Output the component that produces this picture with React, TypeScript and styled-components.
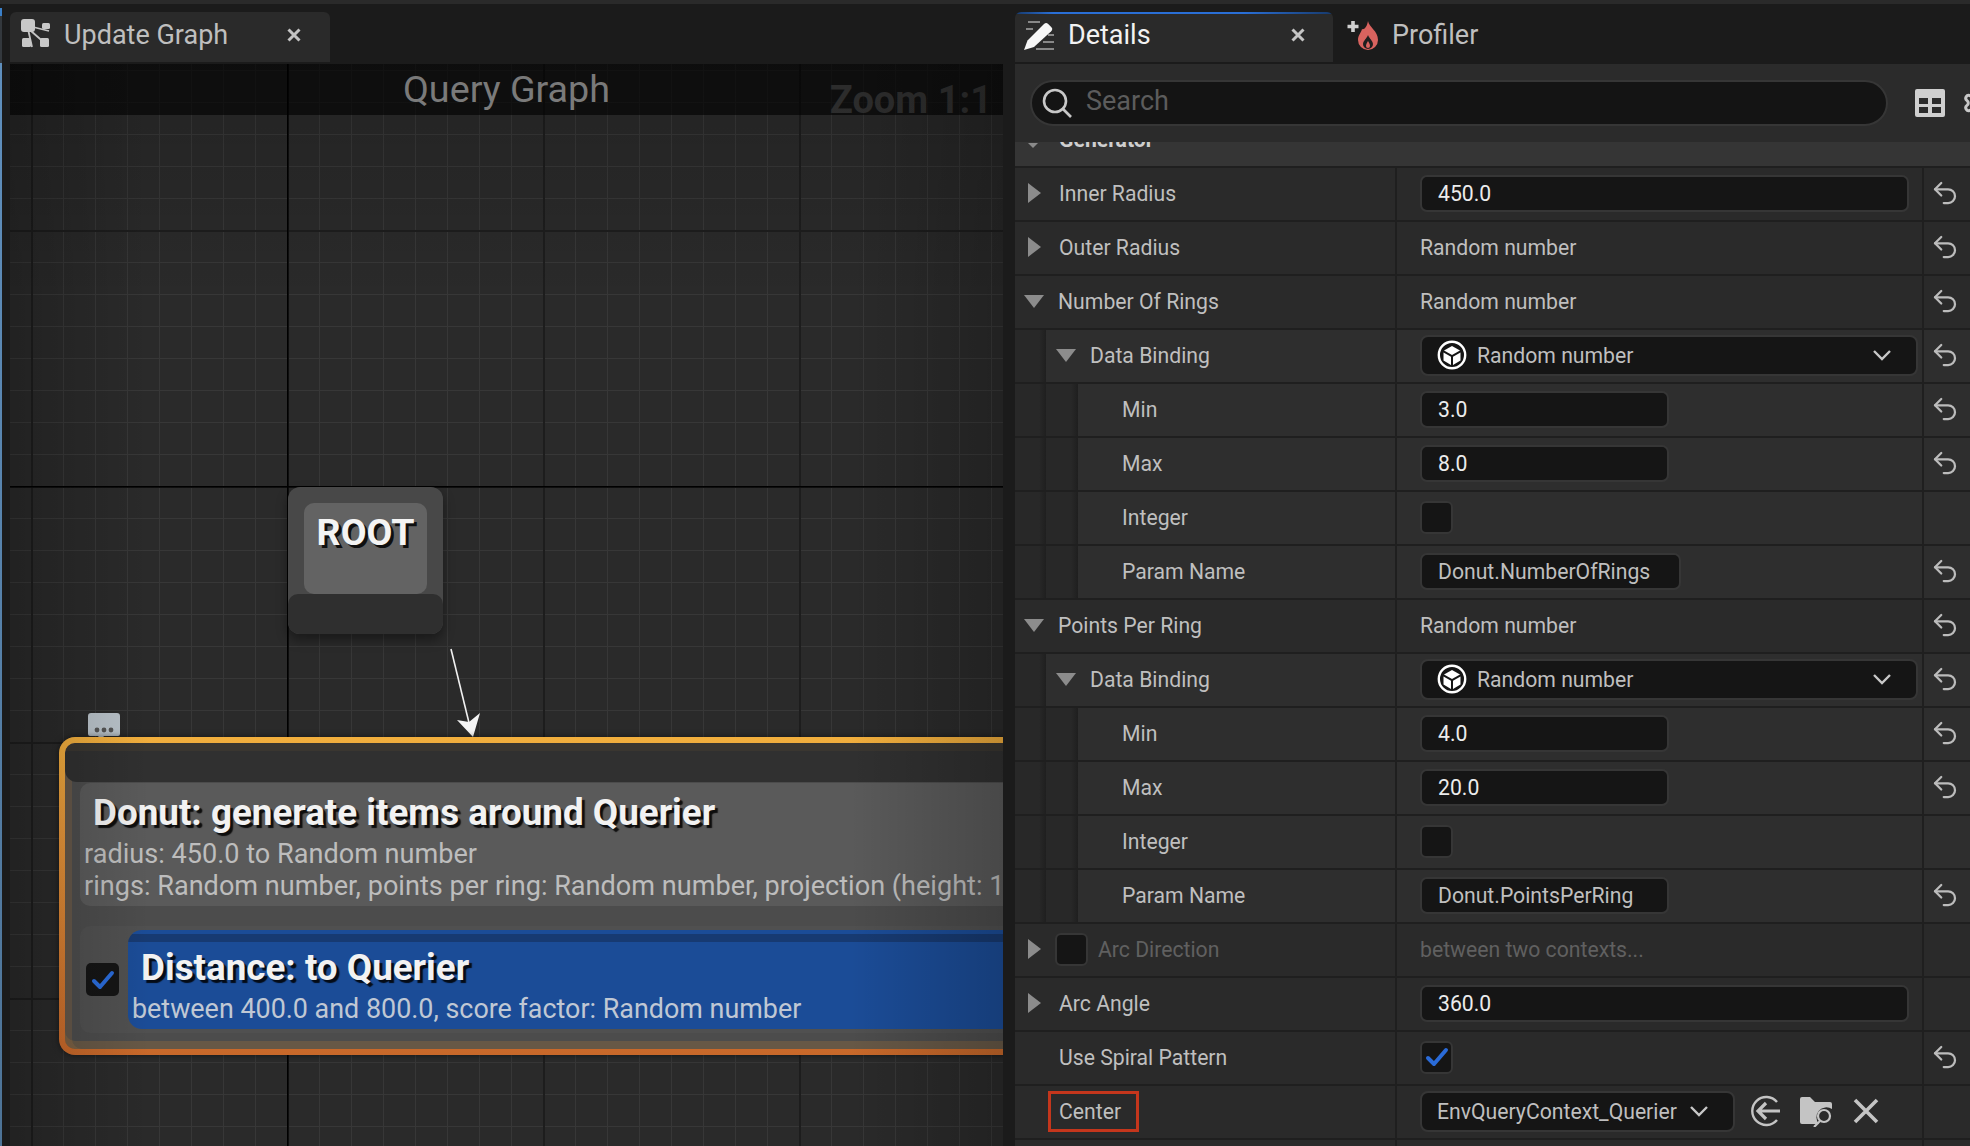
import React from 'react';
import styled, { createGlobalStyle } from 'styled-components';
import { Settings, Undo2 } from 'lucide-react';

const GlobalStyle = createGlobalStyle`
  html, body {
    margin: 0;
    padding: 0;
    background: #1b1b1b;
    font-family: Roboto, "Liberation Sans", sans-serif;
  }
  * { box-sizing: border-box; }
`;

const Page = styled.div`
  width: 1970px;
  height: 1146px;
  overflow: hidden;
  display: flex;
  flex-direction: column;
  background: #1b1b1b;
`;

const TopStrip = styled.div`
  height: 4px;
  flex: none;
  background: #2a2a2a;
`;

const Main = styled.div`
  flex: 1;
  min-height: 0;
  display: flex;
`;

const EdgeStrip = styled.div`
  width: 2px;
  flex: none;
  background: linear-gradient(
    180deg,
    #1b1b1b 4px,
    #3a7fc8 4px,
    #3a7fc8 12px,
    #33383d 12px,
    #33383d 59px,
    #5f8fbd 59px,
    #4d7396 100%
  );
`;

const GraphColumn = styled.section`
  width: 993px;
  margin-left: 8px;
  flex: none;
  display: flex;
  flex-direction: column;
`;

const DetailsColumn = styled.section`
  width: 955px;
  margin-left: 12px;
  flex: none;
  display: flex;
  flex-direction: column;
  overflow: hidden;
`;

const TabRow = styled.div`
  height: 60px;
  flex: none;
  padding: 8px 0 2px;
  display: flex;
  align-items: stretch;
`;

const Tab = styled.div<{ $width: number; $active?: boolean }>`
  width: ${({ $width }) => $width}px;
  display: flex;
  align-items: center;
  font-size: 27px;
  color: #bfbfbf;
  background: ${({ $active }) => ($active ? '#2a2a2a' : 'transparent')};
  border-radius: 6px 6px 0 0;
  padding: 0 29px 5px 9px;
`;

const FocusedTab = styled(Tab)`
  color: #f2f2f2;
  padding-right: 28px;
  background:
    linear-gradient(90deg, #173a6c 0, #2a6fd6 12%, #2a6fd6 72%, #173a6c 100%) top / 100% 2px no-repeat,
    #2a2a2a;
`;

const SideTab = styled(Tab)`
  margin-left: 5px;
  padding-left: 9px;
`;

const TabIcon = styled.svg`
  width: 32px;
  height: 32px;
  flex: none;
  margin-right: 13px;
`;

const PencilIcon = styled(TabIcon)`
  margin-right: 12px;
`;

const FlameIcon = styled(TabIcon)`
  width: 36px;
  height: 34px;
  margin-right: 9px;
`;

const TabClose = styled.svg`
  width: 14px;
  height: 14px;
  margin-left: auto;
  stroke: #c4c4c4;
  stroke-width: 3;
`;

const Canvas = styled.div`
  position: relative;
  flex: 1;
  overflow: hidden;
  background-color: #2a2a2a;
  background-image:
    linear-gradient(#000, #000),
    linear-gradient(#000, #000),
    linear-gradient(90deg, #1d1d1d 2px, transparent 2px),
    linear-gradient(180deg, #1d1d1d 2px, transparent 2px),
    linear-gradient(90deg, #373737 1.5px, transparent 1.5px),
    linear-gradient(180deg, #373737 1.5px, transparent 1.5px);
  background-size: 1.5px 100%, 100% 1.5px, 256px 256px, 256px 256px, 32px 32px, 32px 32px;
  background-position: 277px 0, 0 422px, 21px 0, 0 166px, 21px 0, 0 6px;
  background-repeat: no-repeat, no-repeat, repeat, repeat, repeat, repeat;

  &::after {
    content: '';
    position: absolute;
    inset: 0;
    pointer-events: none;
    background:
      linear-gradient(90deg, rgba(0, 0, 0, 0.2), transparent 140px, transparent 840px, rgba(0, 0, 0, 0.2)),
      linear-gradient(180deg, rgba(0, 0, 0, 0.16), transparent 240px);
  }
`;

const GraphTitleBar = styled.div`
  position: relative;
  height: 51px;
  background: rgba(0, 0, 0, 0.62);
  display: flex;
  justify-content: center;
  align-items: center;
`;

const GraphTitle = styled.div`
  font-size: 37.7px;
  line-height: 51px;
  color: #8e8e8e;
`;

const ZoomLabel = styled.div`
  position: absolute;
  right: 11px;
  top: 14px;
  font-size: 38px;
  font-weight: 700;
  line-height: 44px;
  color: #333;
`;

const RootNode = styled.div`
  position: absolute;
  left: 278px;
  top: 423px;
  width: 155px;
  height: 147px;
  border-radius: 12px;
  background: #484848;
  padding: 16px 16px 0;
  box-shadow: 0 6px 12px rgba(0, 0, 0, 0.4);
  overflow: hidden;
`;

const RootFace = styled.div`
  height: 91px;
  border-radius: 10px;
  background: #636363;
  text-align: center;
  font-size: 37.5px;
  font-weight: 700;
  line-height: 44px;
  padding-top: 7px;
  color: #f4f4f4;
  text-shadow: 3px 3px 0 rgba(0, 0, 0, 0.85);
`;

const RootFoot = styled.div`
  position: absolute;
  left: 0;
  right: 0;
  bottom: 0;
  height: 40px;
  background: #2f2f2f;
  border-radius: 10px 10px 0 0;
`;

const Link = styled.svg`
  position: absolute;
  left: 430px;
  top: 570px;
  width: 60px;
  height: 110px;
`;

const Bubble = styled.svg`
  position: absolute;
  left: 78px;
  top: 649px;
  width: 32px;
  height: 27px;
`;

const NodeFrame = styled.div`
  position: absolute;
  left: 49px;
  top: 673px;
  width: 1100px;
  height: 318px;
  padding: 6px;
  border-radius: 16px;
  background: linear-gradient(180deg, #f2af3d 0%, #e8973a 30%, #c8682a 100%);
  box-shadow: 0 0 6px rgba(0, 0, 0, 0.5);
`;

const NodeBody = styled.div`
  height: 100%;
  border-radius: 10px;
  background: #4c4c4c;
  box-shadow:
    inset 0 -8px 0 rgba(200, 130, 50, 0.22),
    inset 7px 0 0 rgba(232, 150, 60, 0.16);
  padding-bottom: 16px;
  overflow: hidden;
`;

const NodeHeader = styled.div`
  height: 39px;
  margin-bottom: 1px;
  background: linear-gradient(180deg, #3a3630 0, #3a3630 8px, #303030 8px);
  border-radius: 10px 10px 0 12px;
`;

const NodeCard = styled.div`
  height: 123px;
  margin: 0 0 20px 15px;
  padding-top: 8px;
  background: #5a5a5a;
  border-radius: 10px 0 0 10px;
`;

const NodeTitle = styled.div`
  padding-left: 13px;
  font-size: 36.8px;
  font-weight: 700;
  line-height: 44px;
  white-space: nowrap;
  color: #f2f2f2;
  text-shadow: 3px 3px 1px rgba(0, 0, 0, 0.85);
`;

const NodeLine = styled.div`
  padding-left: 4px;
  font-size: 27.1px;
  line-height: 32px;
  white-space: nowrap;
  color: #bdbdbd;
`;

const CardTitle = styled(NodeTitle)`
  margin-bottom: 3px;
`;

const TestRow = styled.div`
  height: 107px;
  margin-left: 15px;
  padding: 4px 0;
  display: flex;
  gap: 9px;
  background: #505050;
  border-radius: 10px 0 0 10px;
`;

const TestCheck = styled.div`
  align-self: center;
  margin-left: 6px;
  width: 33px;
  height: 33px;
  flex: none;
  display: flex;
  align-items: center;
  justify-content: center;
  background: #151515;
  border-radius: 5px;
`;

const TestCard = styled.div`
  flex: 1;
  background: linear-gradient(180deg, #1b4c97 0, #1b4c97 4px, #173a72 4px, #173a72 12px, #1b4c97 12px);
  border-radius: 14px 0 0 14px;
  padding-top: 16px;
`;

const TestLine = styled(NodeLine)`
  margin-top: 3px;
  font-size: 26.9px;
  color: #c0c8d4;
`;

const SearchPanel = styled.div`
  height: 78px;
  flex: none;
  padding: 16px 0 0 15px;
  display: flex;
  align-items: flex-start;
  background: #2b2b2b;
`;

const SearchBox = styled.div`
  width: 858px;
  height: 46px;
  flex: none;
  display: flex;
  align-items: center;
  padding-left: 9px;
  border: 2px solid #363636;
  border-radius: 23px;
  background: #141414;
  font-size: 27px;
  color: #5c5c5c;
`;

const SearchWord = styled.span`
  margin-top: -4px;
`;

const SearchGlyph = styled.svg`
  width: 32px;
  height: 32px;
  flex: none;
  margin-right: 13px;
`;

const ToolIcons = styled.div`
  display: flex;
  align-items: center;
  height: 46px;
  margin-left: 27px;
  gap: 17px;
  color: #c8c8c8;
  flex: none;
`;

const TableGlyph = styled.svg`
  width: 30px;
  height: 28px;
`;

const CategoryBar = styled.div`
  height: 26px;
  flex: none;
  overflow: hidden;
  display: flex;
  padding-left: 13px;
  background: #353535;
  border-bottom: 2px solid #1f1f1f;
`;

const CategoryCaret = styled.span`
  width: 0;
  height: 0;
  margin-top: 1px;
  border-style: solid;
  border-width: 5px 5px 0;
  border-color: #8a8a8a transparent transparent;
`;

const CategoryName = styled.div`
  margin: -14px 0 0 21px;
  font-size: 21.2px;
  font-weight: 700;
  line-height: 24px;
  color: #cfcfcf;
`;

const PropertyList = styled.div`
  flex: 1;
  overflow: hidden;
`;

const Row = styled.div<{ $nested?: boolean }>`
  height: 54px;
  display: flex;
  background: ${({ $nested }) => ($nested ? '#2e2e2e' : '#2a2a2a')};
  border-bottom: 2px solid #1f1f1f;
  font-size: 21.2px;
  color: #bfbfbf;
`;

const NameCell = styled.div`
  width: 380px;
  flex: none;
  display: flex;
  align-items: center;
  background: #2a2a2a;
`;

const Rail = styled.div<{ $width: number }>`
  width: ${({ $width }) => $width}px;
  height: 100%;
  flex: none;
  background: linear-gradient(90deg, #282828 0, #282828 78%, #1f1f1f 100%);
`;

const NameInner = styled.div<{ $nested?: boolean; $indent: number }>`
  flex: 1;
  height: 100%;
  display: flex;
  align-items: center;
  padding: 0 0 2px ${({ $indent }) => $indent}px;
  background: ${({ $nested }) => ($nested ? '#2e2e2e' : '#2a2a2a')};
`;

const Caret = styled.span<{ $open?: boolean }>`
  width: 0;
  height: 0;
  flex: none;
  border-style: solid;
  border-color: transparent;
  ${({ $open }) =>
    $open
      ? `
    border-width: 13px 10px 0;
    border-top-color: #8c8c8c;
    margin: 0 14px 0 -4px;
  `
      : `
    border-width: 10px 0 10px 13px;
    border-left-color: #8c8c8c;
    margin-right: 18px;
  `}
`;

const CaretGap = styled.span`
  width: 31px;
  flex: none;
`;

const Dim = styled.span`
  color: #606060;
`;

const MarkedLabel = styled.span`
  margin-left: -11px;
  padding: 8px 15px 8px 8px;
  border: 3px solid #c4361c;
  line-height: 19px;
`;

const ValueCell = styled.div`
  width: 527px;
  flex: none;
  display: flex;
  align-items: center;
  gap: 18px;
  padding: 0 0 2px 23px;
  border-left: 2px solid #1f1f1f;
`;

const ResetCell = styled.div`
  width: 48px;
  flex: none;
  display: flex;
  align-items: center;
  justify-content: center;
  padding: 0 5px 2px 0;
  color: #bcbcbc;
  border-left: 2px solid #1f1f1f;
`;

const Field = styled.div<{ $width: number; $bright?: boolean }>`
  width: ${({ $width }) => $width}px;
  height: 37px;
  flex: none;
  display: flex;
  align-items: center;
  padding-left: 16px;
  background: #151515;
  border: 2px solid #363636;
  border-radius: 7px;
  color: ${({ $bright }) => ($bright ? '#ececec' : '#bfbfbf')};
`;

const Select = styled.div<{ $width: number }>`
  width: ${({ $width }) => $width}px;
  height: 41px;
  flex: none;
  display: flex;
  align-items: center;
  padding: 0 24px 0 15px;
  margin-right: -3px;
  background: #151515;
  border: 2px solid #363636;
  border-radius: 8px;
  color: #bfbfbf;
`;

const SelectChevron = styled.svg`
  width: 20px;
  height: 12px;
  margin-left: auto;
  flex: none;
`;

const AssetIcon = styled.svg`
  width: 30px;
  height: 30px;
  flex: none;
  margin-right: 10px;
`;

const CheckBox = styled.div<{ $inline?: boolean }>`
  width: 33px;
  height: 33px;
  flex: none;
  margin: ${({ $inline }) => ($inline ? '0 10px 0 -4px' : '0')};
  display: flex;
  align-items: center;
  justify-content: center;
  background: #151515;
  border: 2px solid #363636;
  border-radius: 6px;
`;

const TinyAction = styled.svg`
  width: 32px;
  height: 32px;
  flex: none;
`;

const CheckMark = () => (
  <svg width="24" height="22" viewBox="0 0 24 22" fill="none">
    <path d="M3 12l6 6L21 4" stroke="#2a6bd8" strokeWidth="4" strokeLinecap="round" strokeLinejoin="round" />
  </svg>
);

const CloseGlyph = () => (
  <TabClose viewBox="0 0 14 14" fill="none">
    <path d="M1.5 1.5l11 11M12.5 1.5l-11 11" />
  </TabClose>
);

const CubeBadge = () => (
  <AssetIcon viewBox="0 0 30 30" fill="none">
    <circle cx="15" cy="15" r="13.2" stroke="#fff" strokeWidth="2.4" />
    <path d="M15 6l8 4.5-8 4.5-8-4.5z" fill="#fff" />
    <path d="M6.5 12.5l7.5 4.2V25l-7.5-4.4zM23.5 12.5L16 16.7V25l7.5-4.4z" fill="#fff" />
  </AssetIcon>
);

const ChevronDown = () => (
  <SelectChevron viewBox="0 0 20 12" fill="none">
    <path d="M2 2l8 8 8-8" stroke="#c8c8c8" strokeWidth="2.4" />
  </SelectChevron>
);

const Reset = () => <Undo2 size={30} strokeWidth={1.8} />;

type RowData = {
  name: string;
  depth?: 0 | 1 | 2;
  caret?: 'open' | 'closed';
  value?: React.ReactNode;
  reset?: boolean;
};

const binding: React.ReactNode = (
  <Select $width={498}>
    <CubeBadge />
    Random number
    <ChevronDown />
  </Select>
);

const rows: RowData[] = [
  { name: 'Inner Radius', caret: 'closed', value: <Field $width={489} $bright>450.0</Field>, reset: true },
  { name: 'Outer Radius', caret: 'closed', value: 'Random number', reset: true },
  { name: 'Number Of Rings', caret: 'open', value: 'Random number', reset: true },
  { name: 'Data Binding', depth: 1, caret: 'open', value: binding, reset: true },
  { name: 'Min', depth: 2, value: <Field $width={249} $bright>3.0</Field>, reset: true },
  { name: 'Max', depth: 2, value: <Field $width={249} $bright>8.0</Field>, reset: true },
  { name: 'Integer', depth: 2, value: <CheckBox /> },
  { name: 'Param Name', depth: 2, value: <Field $width={261}>Donut.NumberOfRings</Field>, reset: true },
  { name: 'Points Per Ring', caret: 'open', value: 'Random number', reset: true },
  { name: 'Data Binding', depth: 1, caret: 'open', value: binding, reset: true },
  { name: 'Min', depth: 2, value: <Field $width={249} $bright>4.0</Field>, reset: true },
  { name: 'Max', depth: 2, value: <Field $width={249} $bright>20.0</Field>, reset: true },
  { name: 'Integer', depth: 2, value: <CheckBox /> },
  { name: 'Param Name', depth: 2, value: <Field $width={249}>Donut.PointsPerRing</Field>, reset: true },
];

const PropertyRow = ({ name, depth = 0, caret, value, reset }: RowData) => (
  <Row $nested={depth > 0}>
    <NameCell>
      {depth > 0 && <Rail $width={31} />}
      {depth > 1 && <Rail $width={32} />}
      <NameInner $nested={depth > 0} $indent={depth === 0 ? 13 : depth === 1 ? 14 : 44}>
        {caret && <Caret $open={caret === 'open'} />}
        {!caret && depth === 0 && <CaretGap />}
        {name}
      </NameInner>
    </NameCell>
    <ValueCell>{value}</ValueCell>
    <ResetCell>{reset && <Reset />}</ResetCell>
  </Row>
);

const App = () => (
  <Page>
    <GlobalStyle />
    <TopStrip />
    <Main>
      <EdgeStrip />
      <GraphColumn>
        <TabRow>
          <Tab $width={320} $active>
            <TabIcon viewBox="0 0 32 32">
              <path d="M9 10l4 18M14 8l16 4M12 12l16 14" stroke="#c4c4c4" strokeWidth="1.8" fill="none" />
              <rect x="2" y="0" width="14" height="13" rx="3" fill="#c8c8c8" />
              <rect x="3" y="19" width="9" height="9" rx="1.5" fill="#c8c8c8" />
              <rect x="23" y="4" width="8" height="6" rx="1.5" fill="#c8c8c8" />
              <rect x="21" y="19" width="9" height="9" rx="1.5" fill="#c8c8c8" />
            </TabIcon>
            Update Graph
            <CloseGlyph />
          </Tab>
        </TabRow>
        <Canvas>
          <GraphTitleBar>
            <GraphTitle>Query Graph</GraphTitle>
            <ZoomLabel>Zoom 1:1</ZoomLabel>
          </GraphTitleBar>
          <RootNode>
            <RootFace>ROOT</RootFace>
            <RootFoot />
          </RootNode>
          <Link viewBox="0 0 60 110" fill="none">
            <path d="M11 15l20 82" stroke="#f0f0f0" strokeWidth="1.6" />
            <path d="M33 103L17 86l12 2 11-9z" fill="#f4f4f4" />
          </Link>
          <Bubble viewBox="0 0 32 27">
            <path d="M3 0h26a3 3 0 0 1 3 3v18a2 2 0 0 1-2 2H16l-3 4-3-4H2a2 2 0 0 1-2-2V3a3 3 0 0 1 3-3z" fill="#b9c2c9" />
            <circle cx="9" cy="17" r="2.4" fill="#555" />
            <circle cx="16" cy="17" r="2.4" fill="#555" />
            <circle cx="23" cy="17" r="2.4" fill="#555" />
          </Bubble>
          <NodeFrame>
            <NodeBody>
              <NodeHeader />
              <NodeCard>
                <CardTitle>Donut: generate items around Querier</CardTitle>
                <NodeLine>radius: 450.0 to Random number</NodeLine>
                <NodeLine>rings: Random number, points per ring: Random number, projection (height: 1</NodeLine>
              </NodeCard>
              <TestRow>
                <TestCheck>
                  <CheckMark />
                </TestCheck>
                <TestCard>
                  <NodeTitle>Distance: to Querier</NodeTitle>
                  <TestLine>between 400.0 and 800.0, score factor: Random number</TestLine>
                </TestCard>
              </TestRow>
            </NodeBody>
          </NodeFrame>
        </Canvas>
      </GraphColumn>
      <DetailsColumn>
        <TabRow>
          <FocusedTab $width={318} $active>
            <PencilIcon viewBox="0 0 32 32">
              <path d="M4 3h12M2 10h7M24 16h6M19 23h11M12 30h18" stroke="#a8a8a8" strokeWidth="1.6" fill="none" />
              <path d="M0 31l3.5-9.5L20 5a3 3 0 0 1 4.2 0l3 3a3 3 0 0 1 0 4.2L10 28z" fill="#f6f6f6" />
            </PencilIcon>
            Details
            <CloseGlyph />
          </FocusedTab>
          <SideTab $width={200}>
            <FlameIcon viewBox="0 0 36 34">
              <path d="M6 3v11M0.5 8.5h11" stroke="#cfcfcf" strokeWidth="3.6" fill="none" />
              <path d="M21 3c1 6 10 10 10 19a10 10 0 0 1-20 0c0-5 3-7 4-11 2 1 5-2 6-8z" fill="#d9635f" />
              <path d="M21 17c1 3 5 6 5 9a5 5 0 0 1-10 0c0-3 4-6 5-9z" fill="#1f1f1f" />
              <path d="M21 23c1 2 2 3 2 5a2 2 0 0 1-4 0c0-2 1-3 2-5z" fill="#d9635f" />
            </FlameIcon>
            Profiler
          </SideTab>
        </TabRow>
        <SearchPanel>
          <SearchBox>
            <SearchGlyph viewBox="0 0 32 32" fill="none">
              <circle cx="14" cy="14" r="11" stroke="#c8c8c8" strokeWidth="2.6" />
              <path d="M22 22l8 8" stroke="#c8c8c8" strokeWidth="2.6" />
            </SearchGlyph>
            <SearchWord>Search</SearchWord>
          </SearchBox>
          <ToolIcons>
            <TableGlyph viewBox="0 0 30 28">
              <path
                fillRule="evenodd"
                d="M2 0h26a2 2 0 0 1 2 2v24a2 2 0 0 1-2 2H2a2 2 0 0 1-2-2V2a2 2 0 0 1 2-2zM4 9v6h9V9zm13 0v6h9V9zM4 18v6h9v-6zm13 0v6h9v-6z"
                fill="#cfcfcf"
              />
            </TableGlyph>
            <Settings size={30} strokeWidth={2.4} />
          </ToolIcons>
        </SearchPanel>
        <CategoryBar>
          <CategoryCaret />
          <CategoryName>Generator</CategoryName>
        </CategoryBar>
        <PropertyList>
          {rows.map((row, i) => (
            <PropertyRow key={i} {...row} />
          ))}
          <Row>
            <NameCell>
              <NameInner $indent={13}>
                <Caret />
                <CheckBox $inline />
                <Dim>Arc Direction</Dim>
              </NameInner>
            </NameCell>
            <ValueCell>
              <Dim>between two contexts...</Dim>
            </ValueCell>
            <ResetCell />
          </Row>
          <PropertyRow name="Arc Angle" caret="closed" value={<Field $width={489} $bright>360.0</Field>} />
          <PropertyRow
            name="Use Spiral Pattern"
            value={
              <CheckBox>
                <CheckMark />
              </CheckBox>
            }
            reset
          />
          <Row>
            <NameCell>
              <NameInner $indent={44}>
                <MarkedLabel>Center</MarkedLabel>
              </NameInner>
            </NameCell>
            <ValueCell>
              <Select $width={315}>
                EnvQueryContext_Querier
                <ChevronDown />
              </Select>
              <TinyAction viewBox="0 0 32 32" fill="none">
                <path d="M27 7a14 14 0 1 0 0 18" stroke="#c4c4c4" strokeWidth="2.4" />
                <path d="M16 8l-8 8 8 8M8 16h22" stroke="#c4c4c4" strokeWidth="3.2" />
              </TinyAction>
              <TinyAction viewBox="0 0 32 32" fill="none">
                <path d="M0 4a2 2 0 0 1 2-2h8l5 5h15a2 2 0 0 1 2 2v5a10 10 0 0 0-13 15H2a2 2 0 0 1-2-2z" fill="#c4c4c4" />
                <circle cx="24" cy="21" r="6" stroke="#c4c4c4" strokeWidth="2.2" />
                <path d="M20 26l-6 6" stroke="#c4c4c4" strokeWidth="2.2" />
              </TinyAction>
              <TinyAction viewBox="0 0 32 32" fill="none">
                <path d="M5 5l22 22M27 5L5 27" stroke="#c4c4c4" strokeWidth="3.6" />
              </TinyAction>
            </ValueCell>
            <ResetCell />
          </Row>
          <Row>
            <NameCell />
            <ValueCell />
            <ResetCell />
          </Row>
        </PropertyList>
      </DetailsColumn>
    </Main>
  </Page>
);

export default App;
